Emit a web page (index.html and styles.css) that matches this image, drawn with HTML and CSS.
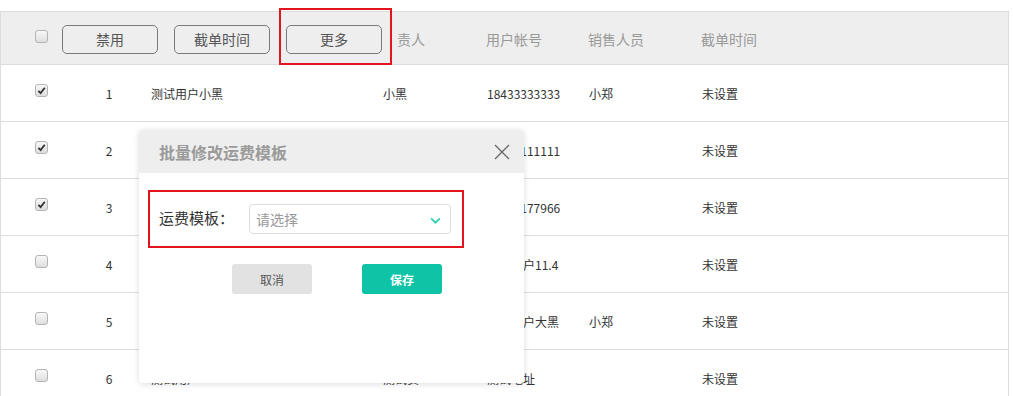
FILE: index.html
```html
<!DOCTYPE html>
<html lang="zh-CN">
<head>
<meta charset="utf-8">
<title>批量修改运费模板</title>
<link rel="stylesheet" href="styles.css">
</head>
<body>
<div class="page">
  <div class="grid">
    <div class="row head">
      <div class="head-actions">
        <span class="cb"></span>
        <button class="hbtn">禁用</button>
        <button class="hbtn">截单时间</button>
        <span class="mark-wrap"><button class="hbtn">更多</button><span class="mark mark-more"></span></span>
        <span class="hlabel">责人</span>
      </div>
      <div class="cell hcell">用户帐号</div>
      <div class="cell hcell">销售人员</div>
      <div class="cell hcell">截单时间</div>
    </div>

    <div class="row">
      <div class="cell c-cb"><span class="cb on"><svg viewBox="0 0 12 12"><path d="M2.6 6.4 L5 8.8 L9.6 3" /></svg></span></div>
      <div class="cell c-no">1</div>
      <div class="cell">测试用户小黑</div>
      <div class="cell">小黑</div>
      <div class="cell">18433333333</div>
      <div class="cell">小郑</div>
      <div class="cell">未设置</div>
    </div>
    <div class="row">
      <div class="cell c-cb"><span class="cb on"><svg viewBox="0 0 12 12"><path d="M2.6 6.4 L5 8.8 L9.6 3" /></svg></span></div>
      <div class="cell c-no">2</div>
      <div class="cell">测试用户小白</div>
      <div class="cell">小白</div>
      <div class="cell">13511111111</div>
      <div class="cell"></div>
      <div class="cell">未设置</div>
    </div>
    <div class="row">
      <div class="cell c-cb"><span class="cb on"><svg viewBox="0 0 12 12"><path d="M2.6 6.4 L5 8.8 L9.6 3" /></svg></span></div>
      <div class="cell c-no">3</div>
      <div class="cell">测试用户小红</div>
      <div class="cell">小红</div>
      <div class="cell">15832177966</div>
      <div class="cell"></div>
      <div class="cell">未设置</div>
    </div>
    <div class="row">
      <div class="cell c-cb"><span class="cb"></span></div>
      <div class="cell c-no">4</div>
      <div class="cell">测试用户11.4</div>
      <div class="cell">小黑</div>
      <div class="cell">测试用户11.4</div>
      <div class="cell"></div>
      <div class="cell">未设置</div>
    </div>
    <div class="row">
      <div class="cell c-cb"><span class="cb"></span></div>
      <div class="cell c-no">5</div>
      <div class="cell">测试用户大黑</div>
      <div class="cell">大黑</div>
      <div class="cell">测试用户大黑</div>
      <div class="cell">小郑</div>
      <div class="cell">未设置</div>
    </div>
    <div class="row">
      <div class="cell c-cb"><span class="cb"></span></div>
      <div class="cell c-no">6</div>
      <div class="cell">测试用户</div>
      <div class="cell">测试员</div>
      <div class="cell">测试地址</div>
      <div class="cell"></div>
      <div class="cell">未设置</div>
    </div>
  </div>

  <div class="modal">
    <div class="modal-head">
      <span class="modal-title">批量修改运费模板</span>
      <svg class="close" viewBox="0 0 16 16"><path d="M1 1 L15 15 M15 1 L1 15" /></svg>
    </div>
    <div class="modal-body">
      <div class="form-row">
        <span class="form-label">运费模板：</span>
        <div class="select">
          <span class="placeholder">请选择</span>
          <svg class="chev" viewBox="0 0 10 6"><path d="M1 1 L5 5 L9 1" /></svg>
        </div>
      </div>
      <div class="actions">
        <button class="btn btn-cancel">取消</button>
        <button class="btn btn-save">保存</button>
      </div>
    </div>
  </div>
</div>
</body>
</html>
```

FILE: styles.css
```css
* { box-sizing: border-box; }
html, body { margin: 0; padding: 0; background: #fff; }
body {
  font-family: "Noto Sans CJK SC", "Noto Sans", sans-serif;
  color: #333;
  font-size: 12px;
}
.page {
  position: relative;
  padding-top: 11px;
  width: 1013px;
  height: 396px;
  overflow: hidden;
}
.grid {
  width: 1009px;
  border: 1px solid #dddddd;
  border-bottom: none;
}
.row {
  display: grid;
  grid-template-columns: 81px 54px 232px 104px 102px 113px 1fr;
  height: 57px;
  border-bottom: 1px solid #dddddd;
  align-items: center;
}
.row.head {
  height: 53px;
  background: #eeeeee;
  border-bottom: 1px solid #dddddd;
}
.head-actions {
  grid-column: 1 / span 4;
  display: flex;
  align-items: center;
  padding-left: 34px;
  height: 100%;
}
.head-actions .cb { margin-top: -4px; }
.hbtn {
  width: 96px;
  height: 29px;
  margin-left: 16px;
  margin-top: 3px;
  border: 1px solid #7a7a7a;
  border-radius: 5px;
  background: #eeeeee;
  color: #555;
  font-family: inherit;
  font-size: 14px;
  line-height: 27px;
  padding: 0;
}
.head-actions .cb + .hbtn { margin-left: 14px; }
.mark-wrap { position: relative; margin-left: 16px; display: inline-flex; }
.mark-wrap .hbtn { margin-left: 0; }
.mark {
  position: absolute;
  border: 2px solid #e3141e;
  pointer-events: none;
}
.mark-more {
  left: -7px;
  right: -10px;
  top: -14px;
  bottom: -11px;
}
.hlabel {
  margin-left: 15px;
  font-size: 14px;
  color: #999;
  margin-top: 1px;
}
.cell {
  padding-left: 15px;
  white-space: nowrap;
  overflow: hidden;
}
.hcell {
  font-size: 14px;
  color: #999;
  padding-left: 14px;
  margin-top: 1px;
}
.c-cb { padding-left: 0; display: flex; justify-content: center; margin-top: -5px; }
.c-no { padding-left: 0; text-align: center; }
.cb {
  display: inline-block;
  width: 13px;
  height: 13px;
  border: 1px solid #b4b4b4;
  border-radius: 3px;
  background: linear-gradient(#f8f8f8, #dedede);
  position: relative;
}
.cb svg {
  position: absolute;
  left: 0;
  top: 0;
  width: 11px;
  height: 11px;
  fill: none;
  stroke: #333;
  stroke-width: 2;
}

.modal {
  position: absolute;
  left: 139px;
  top: 130px;
  width: 385px;
  height: 253px;
  background: #fff;
  border-radius: 4px;
  box-shadow: 0 1px 6px rgba(0, 0, 0, 0.14);
  overflow: hidden;
}
.modal-head {
  height: 43px;
  background: #eeeeee;
  display: flex;
  align-items: center;
  justify-content: space-between;
  padding: 0 14px 0 20px;
}
.modal-title {
  font-size: 16px;
  font-weight: bold;
  color: #9a9a9a;
}
.close {
  width: 16px;
  height: 16px;
  fill: none;
  stroke: #666;
  stroke-width: 1.3;
}
.modal-body { padding-top: 17px; }
.form-row {
  margin-left: 9px;
  width: 316px;
  height: 58px;
  border: 2px solid #e3141e;
  display: flex;
  align-items: center;
  padding-left: 9px;
}
.form-label {
  font-size: 15px;
  color: #333;
  width: 90px;
  margin-top: -3px;
}
.select {
  width: 202px;
  height: 30px;
  border: 1px solid #dcdcdc;
  border-radius: 4px;
  display: flex;
  align-items: center;
  justify-content: space-between;
  padding: 0 9px 0 6px;
}
.placeholder { font-size: 14px; color: #999; }
.chev {
  width: 11px;
  height: 7px;
  fill: none;
  stroke: #2dd0b0;
  stroke-width: 1.6;
  margin-top: 3px;
}
.actions {
  display: flex;
  padding-left: 93px;
  margin-top: 16px;
  gap: 50px;
}
.btn {
  width: 80px;
  height: 30px;
  border: none;
  border-radius: 3px;
  font-family: inherit;
  font-size: 12px;
  padding: 0;
}
.btn-cancel { background: #e2e2e2; color: #555; }
.btn-save { background: #0fc3a6; color: #fff; font-weight: bold; }
```
